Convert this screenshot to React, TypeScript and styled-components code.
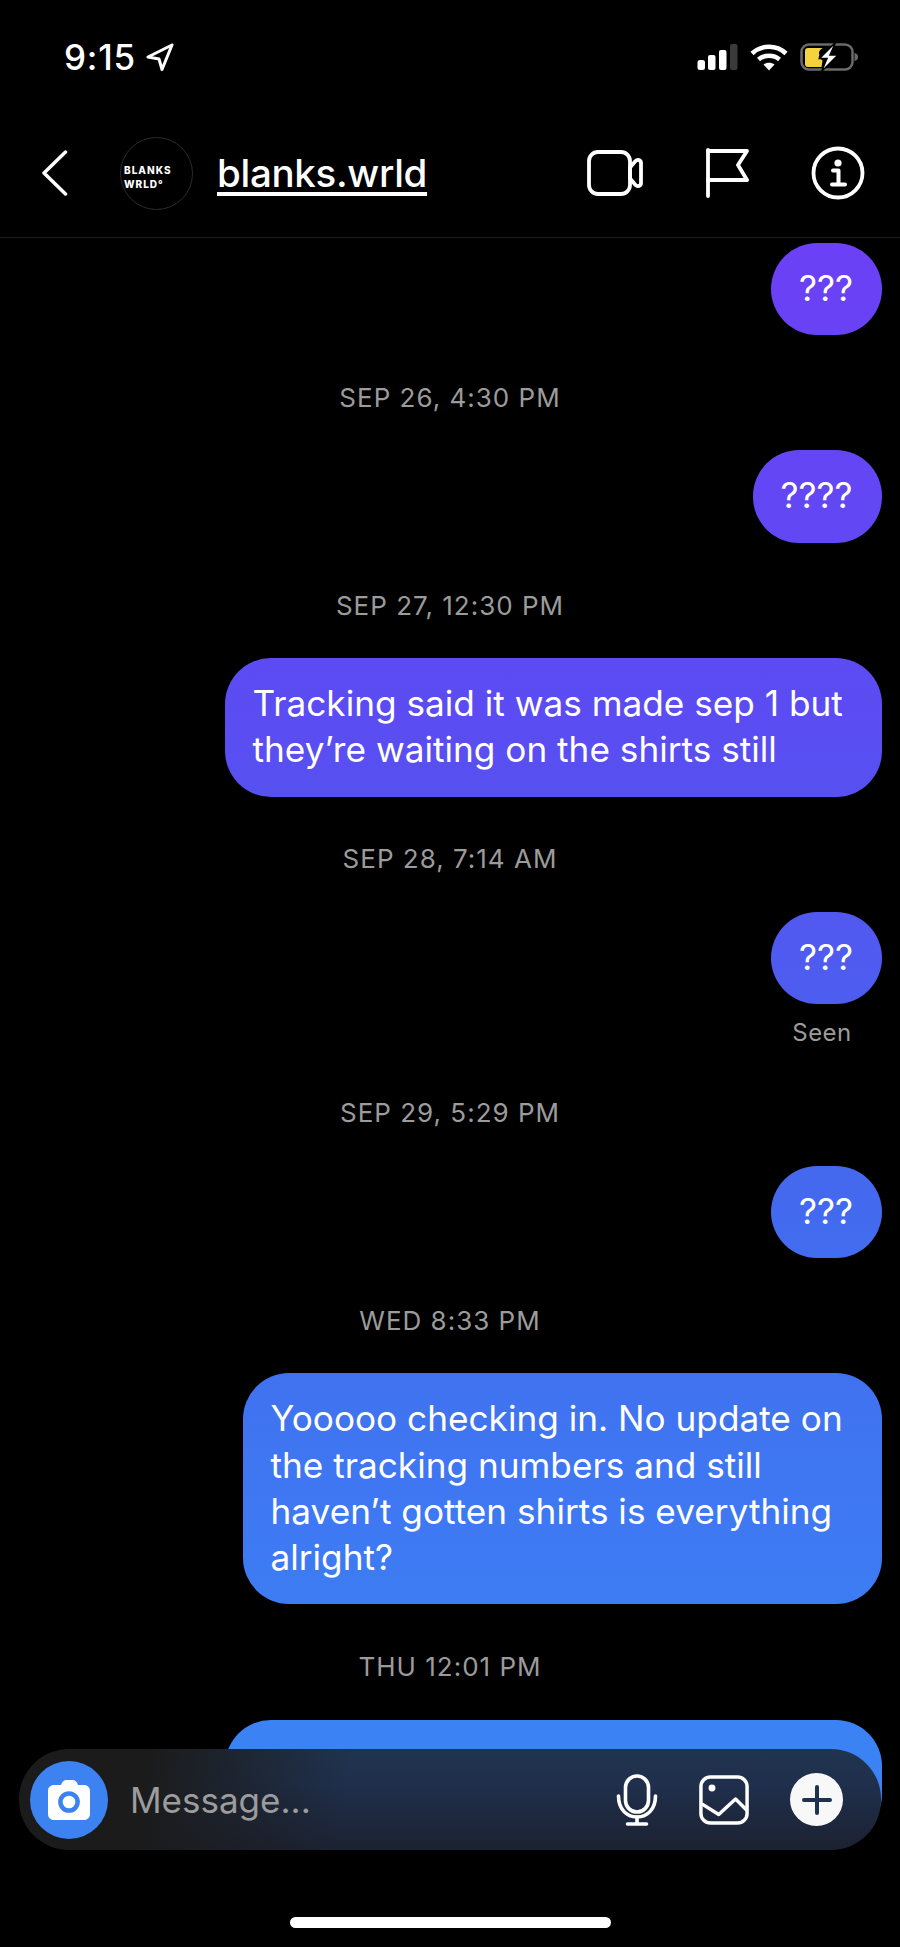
import React from "react";
import styled, { createGlobalStyle } from "styled-components";

const Global = createGlobalStyle`
  html, body { margin: 0; padding: 0; background: #000; }
  * { box-sizing: border-box; }
`;

const Page = styled.div`
  position: relative;
  width: 900px;
  height: 1947px;
  overflow: hidden;
  background: #000;
  color: #fff;
  font-family: Inter, "Liberation Sans", sans-serif;
  display: flex;
  flex-direction: column;
`;

const StatusBar = styled.div`
  height: 114px;
  flex: none;
  display: flex;
  align-items: center;
  justify-content: space-between;
  padding: 0 42px 0 64px;
`;

const StatusLeft = styled.div`
  display: flex;
  align-items: center;
  gap: 10px;
`;

const Time = styled.span`
  font-size: 35px;
  font-weight: 500;
  letter-spacing: 0.8px;
  line-height: 40px;
`;

const StatusRight = styled.div`
  display: flex;
  align-items: center;
  gap: 12px;
`;

const Header = styled.header`
  height: 124px;
  flex: none;
  display: flex;
  align-items: center;
  padding: 0 35px 5px 42px;
  border-bottom: 1px solid #1d1d1d;
`;

const Avatar = styled.div`
  width: 73px;
  height: 73px;
  flex: none;
  margin-left: 52px;
  border-radius: 50%;
  border: 1px solid #2c2c2c;
  padding: 25px 0 0 3px;
  font-weight: 800;
  font-size: 10px;
  line-height: 14px;
  letter-spacing: 1px;
`;

const Username = styled.a`
  margin-left: 24px;
  font-size: 38.5px;
  font-weight: 500;
  letter-spacing: -0.3px;
  color: #fff;
  text-decoration: underline;
  text-decoration-thickness: 3.5px;
  text-underline-offset: 5px;
`;

const Actions = styled.div`
  margin-left: auto;
  display: flex;
  align-items: center;
  gap: 62px;
`;

const Thread = styled.main`
  flex: 1;
  min-height: 0;
  overflow: hidden;
  display: flex;
  flex-direction: column;
  align-items: flex-end;
  padding: 5px 18.5px 0 0;
`;

const Bubble = styled.div<{ $width?: number; $clipped?: boolean }>`
  flex: none;
  padding: 22px 28px 24px;
  border-radius: 46px;
  background: linear-gradient(
      to bottom,
      #6c40f6 243px,
      #5a4df2 730px,
      #436aee 1210px,
      #3b82f5 1720px
    )
    fixed;
  font-size: 35.2px;
  line-height: 46.3px;
  white-space: nowrap;
  ${(p) => (p.$width ? `width: ${p.$width}px;` : "")}
  ${(p) => (p.$clipped ? "height: 120px;" : "")}
`;

const DateLabel = styled.div`
  align-self: stretch;
  margin: 48.8px -18.5px 38.400px 0;
  height: 28px;
  text-align: center;
  font-size: 26px;
  letter-spacing: 1px;
  line-height: 28px;
  color: #9b9b9b;
`;

const Seen = styled.div`
  height: 30px;
  margin: 14px 30px 2.500px 0;
  font-size: 24px;
  letter-spacing: 0.4px;
  line-height: 30px;
  color: #9b9b9b;
`;

const Footer = styled.footer`
  position: absolute;
  left: 0;
  right: 0;
  bottom: 0;
  height: 198px;
  padding: 0 19px;
`;

const Composer = styled.div`
  height: 101px;
  border-radius: 50px;
  display: flex;
  align-items: center;
  padding: 0 38px 0 11px;
  background:
    linear-gradient(100deg, #1b1b1b 15%, rgba(27, 27, 27, 0) 38%),
    linear-gradient(to bottom, #20344f 0%, #1f2f4c 35%, #1c2231 100%);
`;

const CameraButton = styled.div`
  width: 78px;
  height: 78px;
  flex: none;
  border-radius: 50%;
  background: #3c83f1;
  display: flex;
  align-items: center;
  justify-content: center;
`;

const Placeholder = styled.span`
  margin-left: 22px;
  font-size: 35px;
  color: #9c9c9c;
`;

const ComposerTools = styled.div`
  margin-left: auto;
  display: flex;
  align-items: center;
  gap: 41px;
`;

const PlusButton = styled.div`
  width: 53px;
  height: 53px;
  border-radius: 50%;
  background: #f8f8f8;
  display: flex;
  align-items: center;
  justify-content: center;
`;

const HomeIndicator = styled.div`
  width: 321px;
  height: 11px;
  margin: 67px auto 0;
  border-radius: 6px;
  background: #fff;
`;

const Arrow = () => (
  <svg width="28" height="28" viewBox="0 0 28 28" fill="none" stroke="#fff" strokeWidth="3" strokeLinejoin="round">
    <path d="M26 2 2 14l11 2 3 10.500z" />
  </svg>
);

const Signal = () => (
  <svg width="41" height="26" viewBox="0 0 41 26" fill="#fff">
    <rect x="0.500" y="16" width="7.500" height="10" rx="2.500" />
    <rect x="11" y="11" width="7.500" height="15" rx="2" />
    <rect x="22" y="6" width="7.500" height="20" rx="2" />
    <rect x="33" y="0" width="7.500" height="26" rx="2" fill="#3a3a3a" />
  </svg>
);

const Wifi = () => (
  <svg width="38" height="28" viewBox="0 0 38 28" fill="none" stroke="#fff" strokeWidth="4.500">
    <path d="M2 10.500C11.500 1.500 26.500 1.500 36 10.500" />
    <path d="M8.500 16.500C14 11.500 24 11.500 29.500 16.500" />
    <path d="M19 27.500 13.500 21.500C16.500 19 21.500 19 24.500 21.500z" fill="#fff" stroke="none" />
  </svg>
);

const Battery = () => (
  <svg width="58" height="30" viewBox="0 0 58 30" fill="none">
    <rect x="1.500" y="2.500" width="51" height="25" rx="7.500" stroke="#6a6a6a" strokeWidth="2.500" />
    <path d="M54.500 11c2.500.5 3.500 2 3.500 4s-1 3.500-3.500 4z" fill="#6a6a6a" />
    <path d="M8 6h15c-3 1-5 4.500-3.500 7l-1 2 4 3.500-1 6.500H8a3 3 0 0 1-3-3V9a3 3 0 0 1 3-3z" fill="#f5d33f" />
    <path d="M35.500 0.500 19.500 16.500h7.500l-5.500 13L38 13h-8z" fill="#fff" stroke="#000" strokeWidth="1.500" />
  </svg>
);

const Chevron = () => (
  <svg width="26" height="48" viewBox="0 0 26 48" fill="none" stroke="#fff" strokeWidth="3.500" strokeLinecap="round" strokeLinejoin="round">
    <path d="M23.500 3 2 24l21.500 21" />
  </svg>
);

const VideoIcon = () => (
  <svg width="56" height="46" viewBox="0 0 56 46" fill="none" stroke="#fff" strokeWidth="3.800" strokeLinejoin="round">
    <rect x="2" y="2" width="41" height="42" rx="9" />
    <path d="M43 17.500 48.500 11c2-2 5.500-1 5.500 2v20c0 3-3.500 4-5.500 2L43 28.500z" />
  </svg>
);

const FlagIcon = () => (
  <svg width="44" height="50" viewBox="0 0 44 50" fill="none" stroke="#fff" strokeWidth="3.800" strokeLinecap="round" strokeLinejoin="round">
    <path d="M3 2v46" />
    <path d="M3 3h39l-9 14 9 15H3" />
  </svg>
);

const InfoIcon = () => (
  <svg width="54" height="54" viewBox="0 0 54 54" fill="none" stroke="#fff" strokeWidth="3.800">
    <circle cx="27" cy="27" r="24.500" />
    <circle cx="27" cy="17" r="3.600" fill="#fff" stroke="none" />
    <path d="M22 24.500h5.500V37M21 38.500h13" strokeWidth="4" strokeLinecap="round" strokeLinejoin="round" />
  </svg>
);

const CameraIcon = () => (
  <svg width="44" height="42" viewBox="0 0 44 42" fill="none">
    <path
      d="M7 6h7c1-3.500 3-5 5.500-5h6c2.500 0 4.500 1.500 5.500 5h6c3.500 0 6 2.500 6 6v23c0 3.500-2.500 6-6 6H7c-3.500 0-6-2.500-6-6V12c0-3.500 2.500-6 6-6z"
      fill="#fff"
    />
    <circle cx="22" cy="23" r="8.600" stroke="#3c83f1" strokeWidth="4.500" />
  </svg>
);

const MicIcon = () => (
  <svg width="42" height="52" viewBox="0 0 42 52" fill="none" stroke="#fff" strokeWidth="3.600" strokeLinecap="round">
    <rect x="9.500" y="2" width="23" height="36" rx="11.500" />
    <path d="M2.500 22c0 13 8 21 18.500 21s18.500-8 18.500-21" />
    <path d="M21 43v7M11.500 50h19" />
  </svg>
);

const ImageIcon = () => (
  <svg width="50" height="50" viewBox="0 0 52 52" fill="none" stroke="#fff" strokeWidth="3.600" strokeLinejoin="round">
    <rect x="2" y="2" width="48" height="48" rx="10" />
    <circle cx="13.500" cy="13.500" r="3.600" fill="#fff" stroke="none" />
    <path d="M3 30 20.500 41 38 25l12 12" />
  </svg>
);

const PlusIcon = () => (
  <svg width="30" height="30" viewBox="0 0 30 30" fill="none" stroke="#1d3350" strokeWidth="4" strokeLinecap="round">
    <path d="M15 2v26M2 15h26" />
  </svg>
);

type Item =
  | { kind: "date"; text: string }
  | { kind: "bubble"; lines: string[]; width: number }
  | { kind: "seen" }
  | { kind: "clipped" };

const items: Item[] = [
  { kind: "bubble", width: 110.5, lines: ["???"] },
  { kind: "date", text: "SEP 26, 4:30 PM" },
  { kind: "bubble", width: 129, lines: ["????"] },
  { kind: "date", text: "SEP 27, 12:30 PM" },
  {
    kind: "bubble",
    width: 657,
    lines: ["Tracking said it was made sep 1 but", "they’re waiting on the shirts still"],
  },
  { kind: "date", text: "SEP 28, 7:14 AM" },
  { kind: "bubble", width: 110.5, lines: ["???"] },
  { kind: "seen" },
  { kind: "date", text: "SEP 29, 5:29 PM" },
  { kind: "bubble", width: 110.5, lines: ["???"] },
  { kind: "date", text: "WED 8:33 PM" },
  {
    kind: "bubble",
    width: 639,
    lines: [
      "Yooooo checking in. No update on",
      "the tracking numbers and still",
      "haven’t gotten shirts is everything",
      "alright?",
    ],
  },
  { kind: "date", text: "THU 12:01 PM" },
  { kind: "clipped" },
];

export default function App() {
  return (
    <Page>
      <Global />
      <StatusBar>
        <StatusLeft>
          <Time>9:15</Time>
          <Arrow />
        </StatusLeft>
        <StatusRight>
          <Signal />
          <Wifi />
          <Battery />
        </StatusRight>
      </StatusBar>
      <Header>
        <Chevron />
        <Avatar>
          BLANKS
          <br />
          WRLD°
        </Avatar>
        <Username>blanks.wrld</Username>
        <Actions>
          <VideoIcon />
          <FlagIcon />
          <InfoIcon />
        </Actions>
      </Header>
      <Thread>
        {items.map((item, i) => {
          if (item.kind === "date") return <DateLabel key={i}>{item.text}</DateLabel>;
          if (item.kind === "seen") return <Seen key={i}>Seen</Seen>;
          if (item.kind === "clipped") return <Bubble key={i} $width={657} $clipped />;
          return (
            <Bubble key={i} $width={item.width}>
              {item.lines.map((l, j) => (
                <div key={j}>{l}</div>
              ))}
            </Bubble>
          );
        })}
      </Thread>
      <Footer>
        <Composer>
          <CameraButton>
            <CameraIcon />
          </CameraButton>
          <Placeholder>Message...</Placeholder>
          <ComposerTools>
            <MicIcon />
            <ImageIcon />
            <PlusButton>
              <PlusIcon />
            </PlusButton>
          </ComposerTools>
        </Composer>
        <HomeIndicator />
      </Footer>
    </Page>
  );
}
